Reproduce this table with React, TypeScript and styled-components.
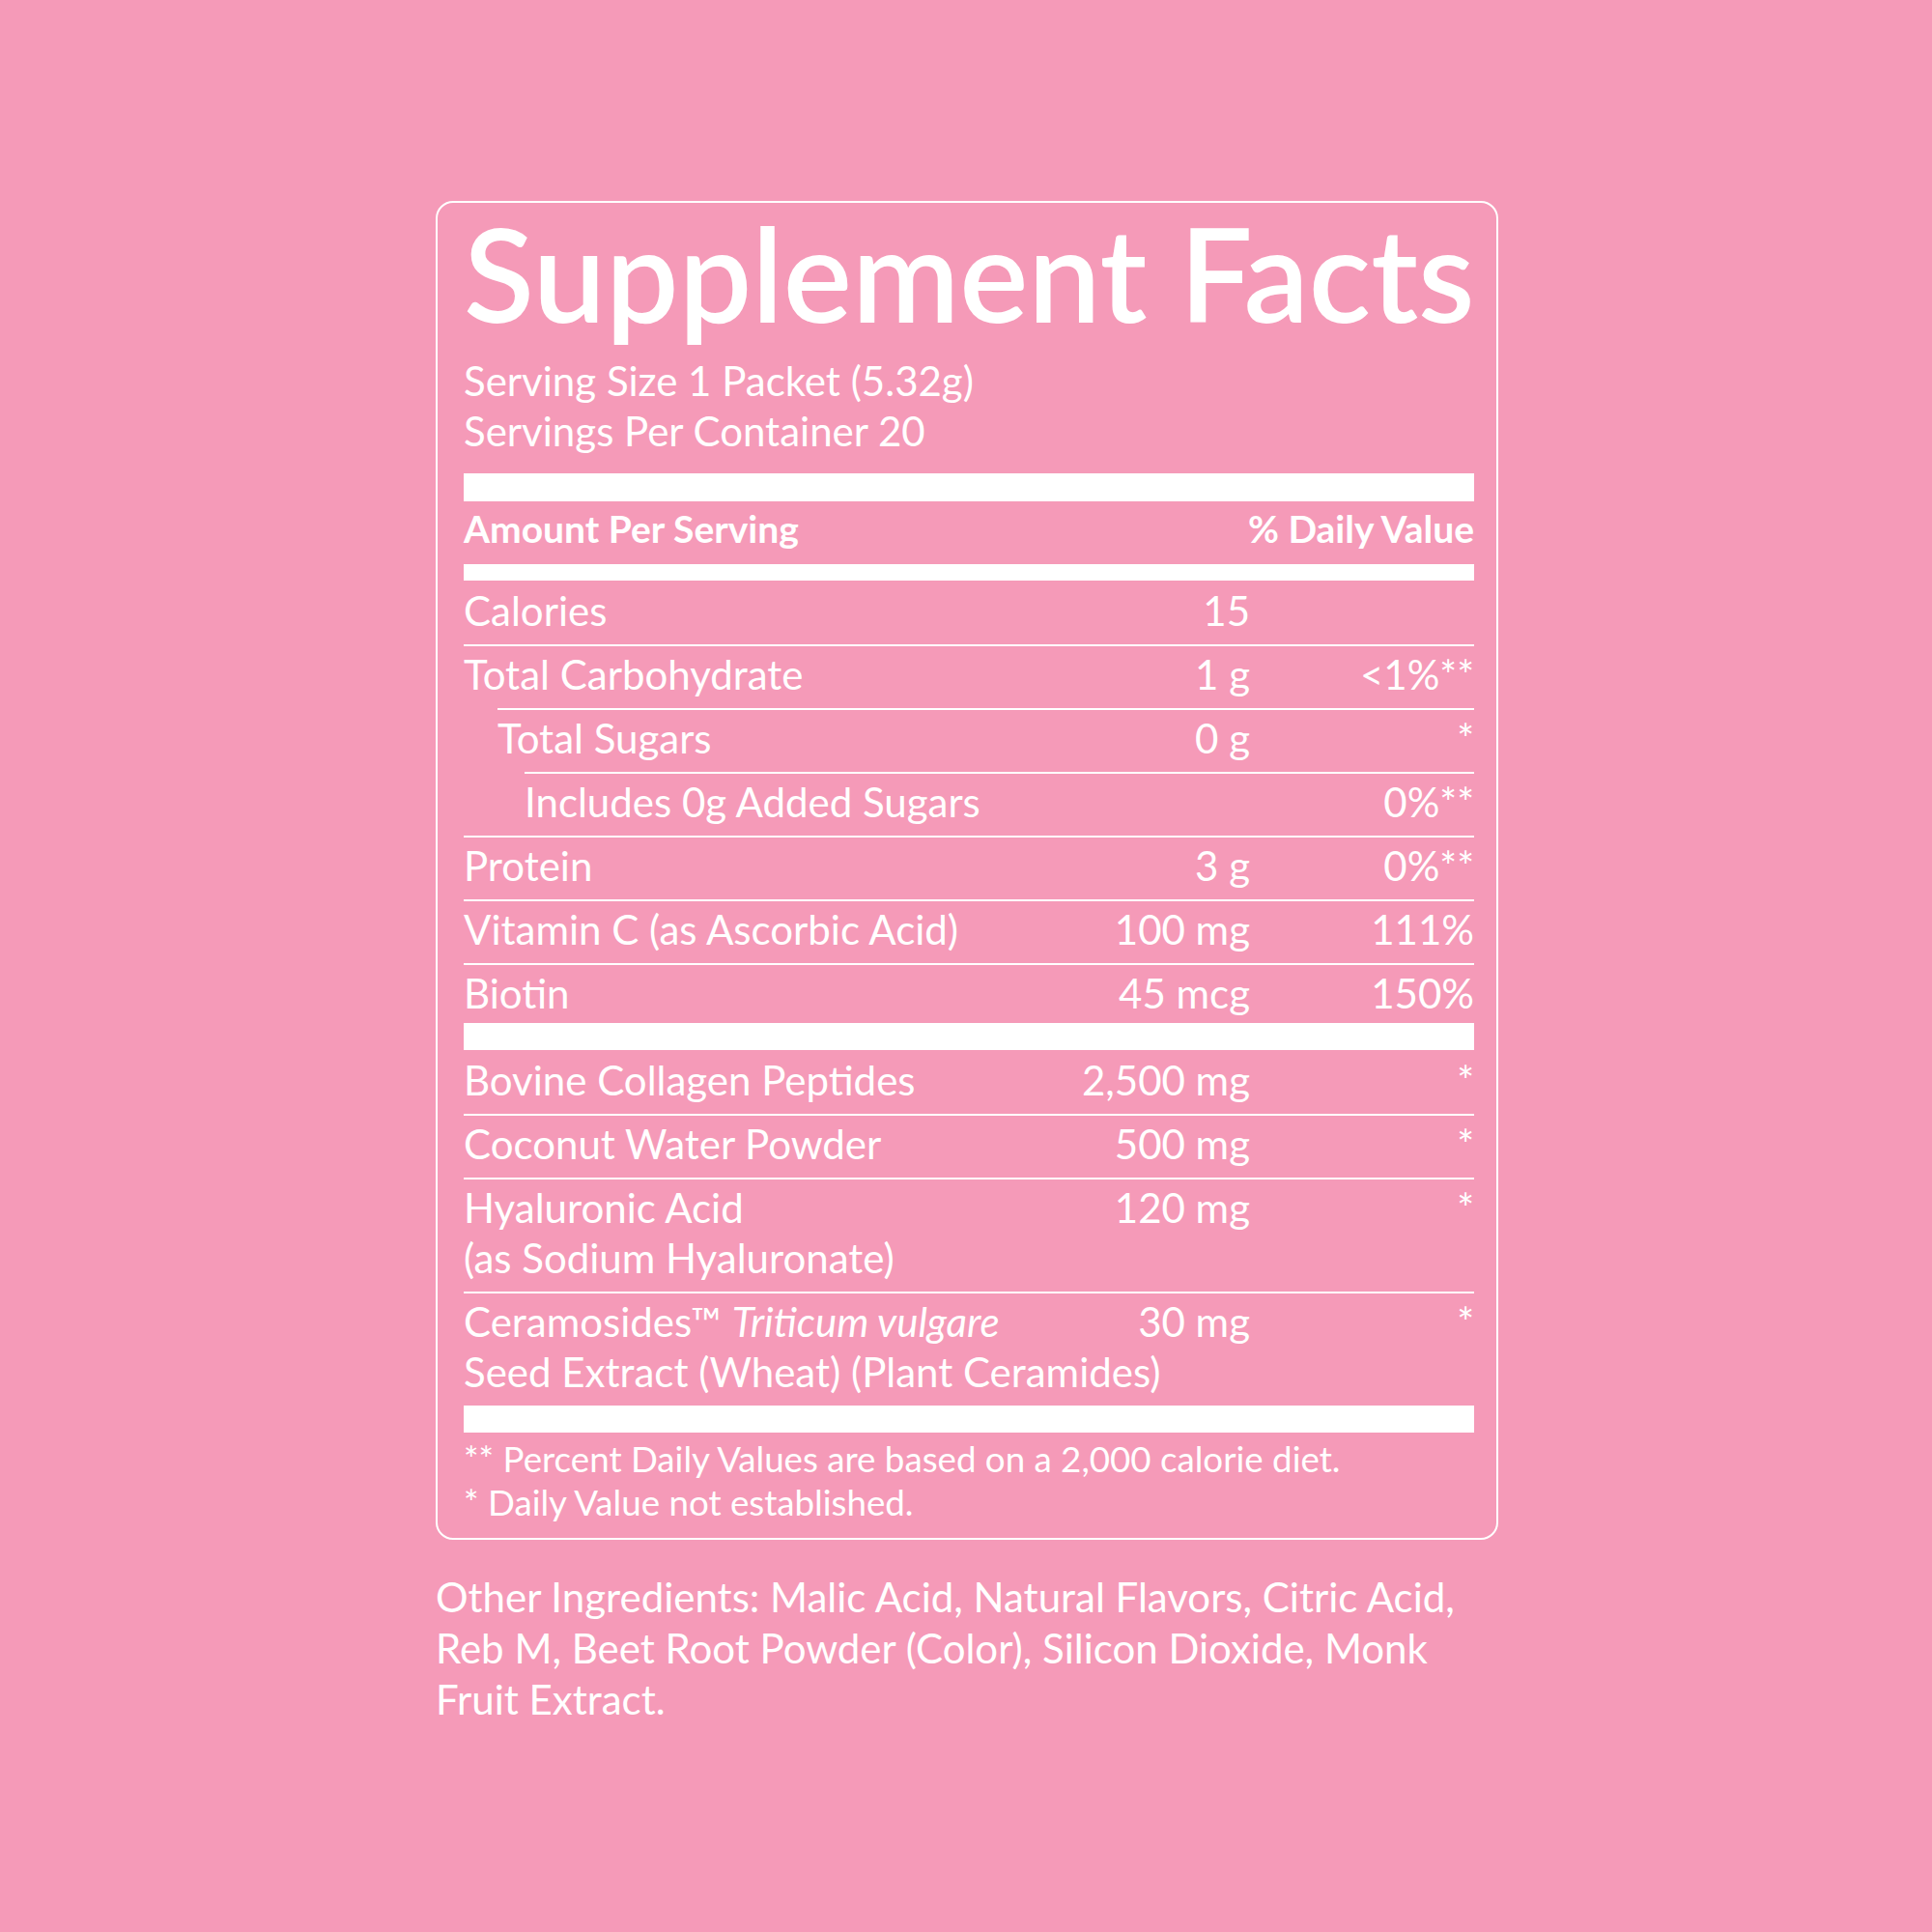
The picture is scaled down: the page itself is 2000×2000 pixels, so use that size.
import React from "react";
import styled, { createGlobalStyle } from "styled-components";

const GlobalStyle = createGlobalStyle`
  html, body {
    margin: 0;
    padding: 0;
    background: #f59ab8;
  }
  * { box-sizing: border-box; }
`;

const Page = styled.div`
  width: 2000px;
  height: 2000px;
  background: #f59ab8;
  padding: 208px 0 0 451px;
  font-family: Lato, "Liberation Sans", sans-serif;
  color: #ffffff;
`;

const Card = styled.section`
  width: 1100px;
  border: 2px solid #ffffff;
  border-radius: 18px;
  padding: 5px 23px 14px 27px;
`;

const Title = styled.h1`
  margin: 0;
  font-size: 134px;
  font-weight: 600;
  line-height: 136px;
  letter-spacing: 0;
  white-space: nowrap;
`;

const ServingInfo = styled.div`
  margin-top: 17px;
  font-size: 42px;
  line-height: 52px;
  white-space: nowrap;
`;

const Bar = styled.div<{ $h: number; $mt?: number }>`
  height: ${(p) => p.$h}px;
  margin-top: ${(p) => p.$mt ?? 0}px;
  background: #ffffff;
`;

const HeaderRow = styled.div`
  display: flex;
  justify-content: space-between;
  font-size: 39px;
  font-weight: 700;
  line-height: 56px;
  padding-bottom: 9px;
  white-space: nowrap;
`;

const Row = styled.div<{ $indent?: number; $first?: boolean; $last?: boolean }>`
  display: grid;
  grid-template-columns: minmax(0, 1fr) 220px 232px;
  margin-left: ${(p) => p.$indent ?? 0}px;
  border-top: ${(p) => (p.$first ? "none" : "2px solid #ffffff")};
  padding-top: ${(p) => (p.$first ? 5 : 3)}px;
  padding-bottom: ${(p) => (p.$last ? 5 : 9)}px;
  font-size: 42px;
  line-height: 52px;
`;

const Name = styled.div`
  white-space: nowrap;
`;

const Amount = styled.div`
  text-align: right;
  white-space: nowrap;
`;

const DV = styled.div`
  text-align: right;
  white-space: nowrap;
`;

const Footnotes = styled.div`
  padding-top: 5px;
  font-size: 36.7px;
  line-height: 45px;
  white-space: nowrap;
`;

const Other = styled.p`
  margin: 33px 0 0 0;
  width: 1100px;
  font-size: 42px;
  line-height: 53px;
  white-space: nowrap;
`;

type Item = {
  name: React.ReactNode;
  amount?: string;
  dv?: string;
  indent?: number;
  first?: boolean;
  last?: boolean;
};

const nutrients: Item[] = [
  { name: "Calories", amount: "15", first: true },
  { name: "Total Carbohydrate", amount: "1 g", dv: "<1%**" },
  { name: "Total Sugars", amount: "0 g", dv: "*", indent: 35 },
  { name: "Includes 0g Added Sugars", dv: "0%**", indent: 63 },
  { name: "Protein", amount: "3 g", dv: "0%**" },
  { name: "Vitamin C (as Ascorbic Acid)", amount: "100 mg", dv: "111%" },
  { name: "Biotin", amount: "45 mcg", dv: "150%", last: true },
];

const others: Item[] = [
  { name: "Bovine Collagen Peptides", amount: "2,500 mg", dv: "*", first: true },
  { name: "Coconut Water Powder", amount: "500 mg", dv: "*" },
  {
    name: (
      <>
        Hyaluronic Acid
        <br />
        (as Sodium Hyaluronate)
      </>
    ),
    amount: "120 mg",
    dv: "*",
  },
  {
    name: (
      <>
        Ceramosides™ <em>Triticum vulgare</em>
        <br />
        Seed Extract (Wheat) (Plant Ceramides)
      </>
    ),
    amount: "30 mg",
    dv: "*",
  },
];

const renderRows = (items: Item[]) =>
  items.map((it, i) => (
    <Row key={i} $indent={it.indent} $first={it.first} $last={it.last}>
      <Name>{it.name}</Name>
      <Amount>{it.amount ?? ""}</Amount>
      <DV>{it.dv ?? ""}</DV>
    </Row>
  ));

export default function App() {
  return (
    <>
      <GlobalStyle />
      <Page>
        <Card>
          <Title>Supplement Facts</Title>
          <ServingInfo>
            Serving Size 1 Packet (5.32g)
            <br />
            Servings Per Container 20
          </ServingInfo>
          <Bar $h={29} $mt={18} />
          <HeaderRow>
            <span>Amount Per Serving</span>
            <span>% Daily Value</span>
          </HeaderRow>
          <Bar $h={17} />
          {renderRows(nutrients)}
          <Bar $h={28} />
          {renderRows(others)}
          <Bar $h={28} />
          <Footnotes>
            ** Percent Daily Values are based on a 2,000 calorie diet.
            <br />* Daily Value not established.
          </Footnotes>
        </Card>
        <Other>
          Other Ingredients: Malic Acid, Natural Flavors, Citric Acid,
          <br />
          Reb M, Beet Root Powder (Color), Silicon Dioxide, Monk
          <br />
          Fruit Extract.
        </Other>
      </Page>
    </>
  );
}
